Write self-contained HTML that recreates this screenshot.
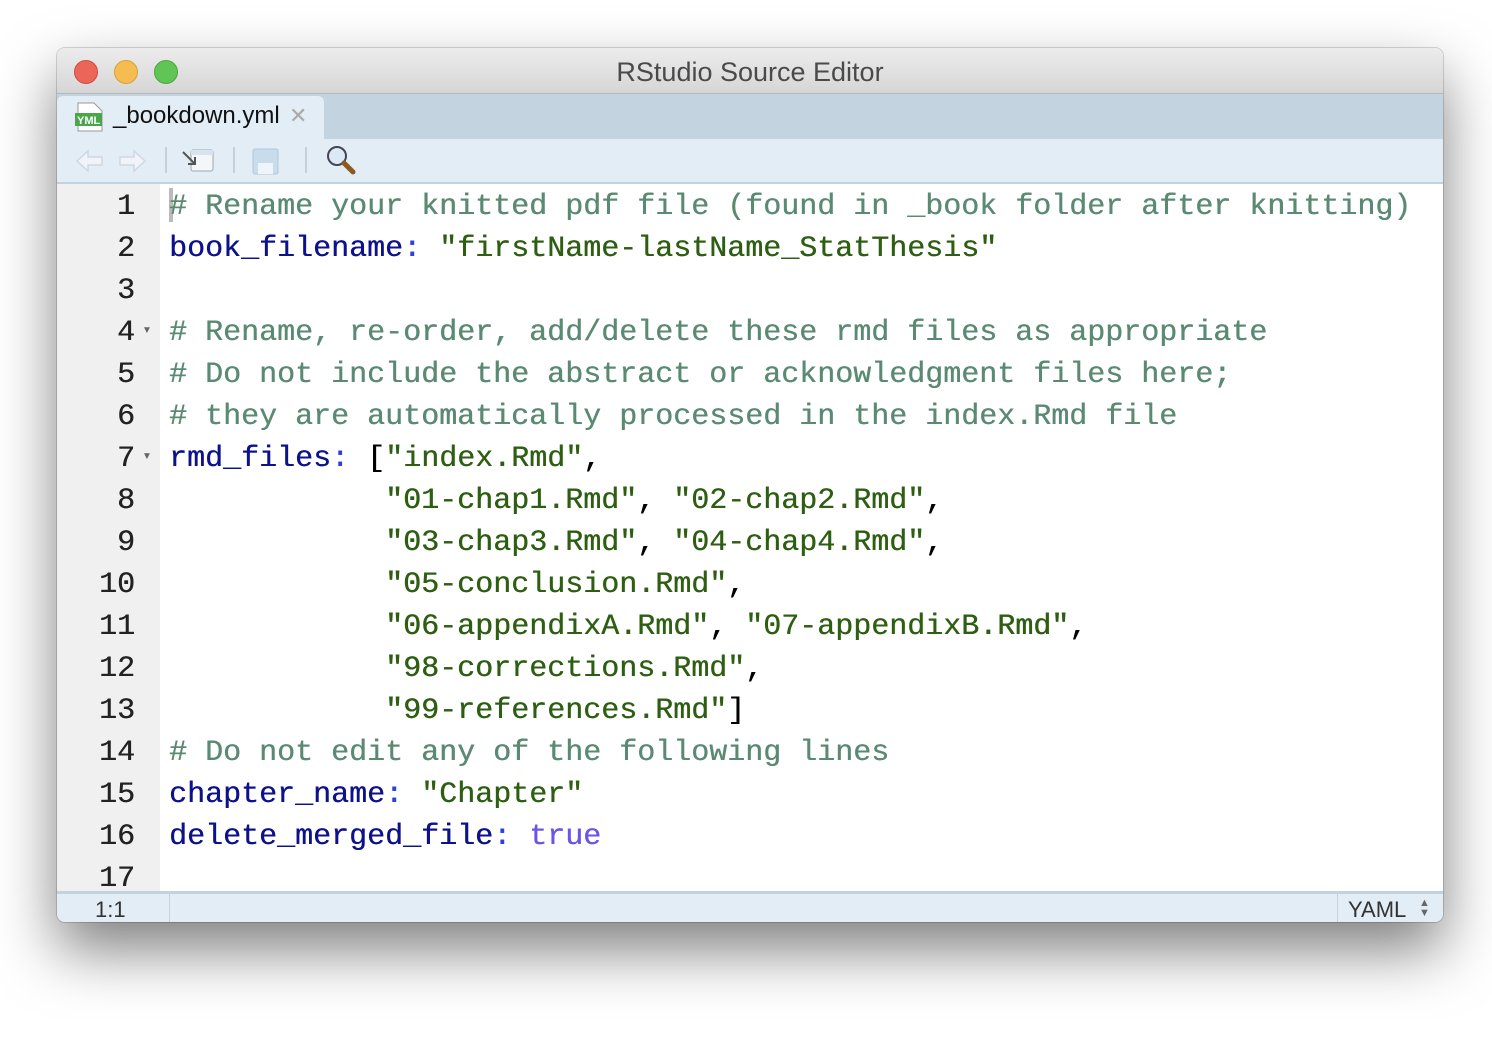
<!DOCTYPE html>
<html><head><style>
body{margin:0;width:1492px;height:1038px;background:#fff;position:relative;overflow:hidden;font-family:"Liberation Sans",sans-serif}
.win{position:absolute;left:57px;top:48px;width:1386px;height:874px;border-radius:8px;overflow:hidden;box-shadow:0 28px 60px rgba(0,0,0,.5),0 0 0 1px rgba(0,0,0,.15);background:#fff}
.title{position:absolute;left:0;top:0;width:100%;height:45px;background:linear-gradient(#ececec,#d6d6d6);border-bottom:1px solid #b8b8b8;text-align:center;line-height:48px;font-size:27px;color:#4a4a4a}
.dot{position:absolute;top:12px;width:22px;height:22px;border-radius:50%}
.tabs{position:absolute;top:46px;left:0;width:100%;height:45px;background:#c3d4e0}
.tab{position:absolute;left:0;top:2px;width:267px;height:43px;background:#e2edf6;border-radius:6px 6px 0 0;font-size:24px;line-height:40px;color:#111}
.tool{position:absolute;top:91px;left:0;width:100%;height:43px;background:#e2edf6;border-bottom:2px solid #c2d3e0}
.sep{position:absolute;top:8px;width:2px;height:26px;background:#c7d0d8}
.gut{position:absolute;top:136px;left:0;width:103px;height:707px;background:#f0f0f0}
.code{position:absolute;top:138px;left:0;width:100%;font-family:"Liberation Mono",monospace;font-size:30px;line-height:42px;white-space:pre;text-shadow:0.4px 0 0 currentColor}
.ln{position:absolute;left:0;width:78px;text-align:right;color:#222}
.tx{position:absolute;left:112px}
.c{color:#5b8a72}.k{color:#0d128a}.p{color:#2e3fe0}.s{color:#2d5e12}.t{color:#6a55e6}
.status{position:absolute;top:843px;left:0;width:100%;height:31px;background:#e2edf6;border-top:3px solid #c2d3e0;font-size:22px;color:#333;line-height:32px}
</style></head><body>
<div class="win">
<div class="title">RStudio Source Editor
<div class="dot" style="left:17px;background:#ec6559;border:1px solid #d3493f"></div>
<div class="dot" style="left:57px;background:#f5bd4f;border:1px solid #d9a03a"></div>
<div class="dot" style="left:97px;background:#60c554;border:1px solid #4aa63c"></div>
</div>
<div class="tabs"><div class="tab">
<svg style="position:absolute;left:17px;top:6px" width="34" height="30"><path d="M4 1h16l8 8v20H4z" fill="#fff" stroke="#999"/><rect x="1" y="11" width="27" height="13" fill="#4aa64a"/><text x="3" y="22" font-size="11" font-weight="bold" fill="#fff" font-family="Liberation Sans">YML</text></svg>
<span style="position:absolute;left:56px">_bookdown.yml</span>
<span style="position:absolute;left:232px;color:#aaa;font-size:22px">✕</span>
</div></div>
<div class="tool">
<svg style="position:absolute;left:18px;top:8px" width="72" height="28"><path d="M2 14l11-10v6h14v8H13v6z M70 14L59 4v6H45v8h14v6z" fill="#f0f4f8" stroke="#d0d8e0" stroke-width="1.5"/></svg>
<div class="sep" style="left:108px"></div>
<svg style="position:absolute;left:124px;top:8px" width="34" height="26"><rect x="10" y="3" width="22" height="21" rx="2" fill="#f4f7fa" stroke="#9aa"/><rect x="10" y="3" width="22" height="5" fill="#d7e3ee"/><path d="M2 5l12 12M14 10v7h-7" stroke="#555" stroke-width="2" fill="none"/></svg>
<div class="sep" style="left:176px"></div>
<svg style="position:absolute;left:195px;top:9px" width="28" height="27"><rect x="1" y="1" width="25" height="25" rx="2" fill="#c8dcec" stroke="#b0c8dc"/><rect x="6" y="15" width="15" height="11" fill="#eef4f9"/></svg>
<div class="sep" style="left:248px"></div>
<svg style="position:absolute;left:268px;top:5px" width="32" height="32"><circle cx="12" cy="12" r="9" fill="#dbe9f6" stroke="#445" stroke-width="2"/><path d="M19 19l9 9" stroke="#8a5a20" stroke-width="5" stroke-linecap="round"/></svg>
</div>
<div class="gut"></div>
<div style="position:absolute;top:140px;left:112px;width:4px;height:34px;background:#bbb"></div>
<div class="code">
<div class="ln" style="top:0">1</div><div class="tx" style="top:0"><span class="c"># Rename your knitted pdf file (found in _book folder after knitting)</span></div>
<div class="ln" style="top:42px">2</div><div class="tx" style="top:42px"><span class="k">book_filename</span><span class="p">:</span> <span class="s">"firstName-lastName_StatThesis"</span></div>
<div class="ln" style="top:84px">3</div>
<div class="ln" style="top:126px">4</div><div class="tx" style="top:126px"><span class="c"># Rename, re-order, add/delete these rmd files as appropriate</span></div>
<div class="ln" style="top:168px">5</div><div class="tx" style="top:168px"><span class="c"># Do not include the abstract or acknowledgment files here;</span></div>
<div class="ln" style="top:210px">6</div><div class="tx" style="top:210px"><span class="c"># they are automatically processed in the index.Rmd file</span></div>
<div class="ln" style="top:252px">7</div><div class="tx" style="top:252px"><span class="k">rmd_files</span><span class="p">:</span> [<span class="s">"index.Rmd"</span>,</div>
<div class="ln" style="top:294px">8</div><div class="tx" style="top:294px">            <span class="s">"01-chap1.Rmd"</span>, <span class="s">"02-chap2.Rmd"</span>,</div>
<div class="ln" style="top:336px">9</div><div class="tx" style="top:336px">            <span class="s">"03-chap3.Rmd"</span>, <span class="s">"04-chap4.Rmd"</span>,</div>
<div class="ln" style="top:378px">10</div><div class="tx" style="top:378px">            <span class="s">"05-conclusion.Rmd"</span>,</div>
<div class="ln" style="top:420px">11</div><div class="tx" style="top:420px">            <span class="s">"06-appendixA.Rmd"</span>, <span class="s">"07-appendixB.Rmd"</span>,</div>
<div class="ln" style="top:462px">12</div><div class="tx" style="top:462px">            <span class="s">"98-corrections.Rmd"</span>,</div>
<div class="ln" style="top:504px">13</div><div class="tx" style="top:504px">            <span class="s">"99-references.Rmd"</span>]</div>
<div class="ln" style="top:546px">14</div><div class="tx" style="top:546px"><span class="c"># Do not edit any of the following lines</span></div>
<div class="ln" style="top:588px">15</div><div class="tx" style="top:588px"><span class="k">chapter_name</span><span class="p">:</span> <span class="s">"Chapter"</span></div>
<div class="ln" style="top:630px">16</div><div class="tx" style="top:630px"><span class="k">delete_merged_file</span><span class="p">:</span> <span class="t">true</span></div>
<div class="ln" style="top:672px">17</div>
</div>
<div style="position:absolute;left:85px;top:277px;font-size:10px;color:#666">▼</div>
<div style="position:absolute;left:85px;top:403px;font-size:10px;color:#666">▼</div>
<div class="status">
<span style="position:absolute;left:38px">1:1</span>
<div style="position:absolute;left:112px;top:0;width:1px;height:31px;background:#c2d3e0"></div>
<div style="position:absolute;left:1280px;top:0;width:1px;height:31px;background:#c2d3e0"></div>
<span style="position:absolute;left:1291px">YAML</span>
<span style="position:absolute;left:1362px;top:4px;font-size:11px;line-height:10px;color:#666">▲<br>▼</span>
</div>
</div>
</body></html>
